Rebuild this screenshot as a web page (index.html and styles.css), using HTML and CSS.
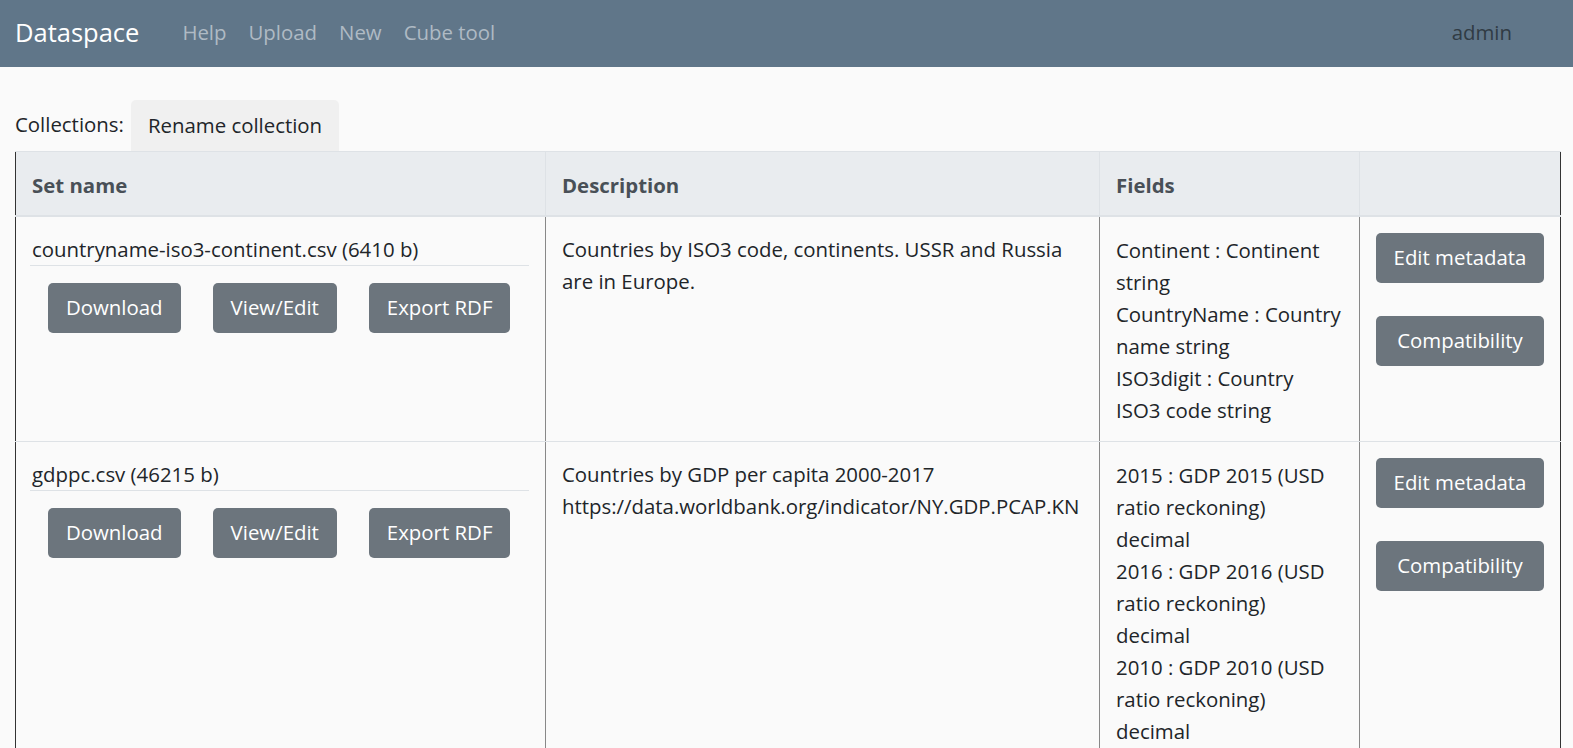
FILE: index.html
```html
<!DOCTYPE html>
<html>
<head>
<meta charset="utf-8">
<title>Dataspace</title>
<link rel="stylesheet" href="styles.css">
</head>
<body>
<nav class="navbar">
  <a class="brand" href="#">Dataspace</a>
  <ul class="nav-links">
    <li><a href="#">Help</a></li>
    <li><a href="#">Upload</a></li>
    <li><a href="#">New</a></li>
    <li><a href="#">Cube tool</a></li>
  </ul>
  <span class="user">admin</span>
</nav>
<main class="content">
  <div class="collections">
    <span class="collections-label">Collections:</span>
    <button class="btn-light">Rename collection</button>
  </div>
  <table class="sets">
    <colgroup>
      <col class="c1"><col class="c2"><col class="c3"><col class="c4">
    </colgroup>
    <thead>
      <tr><th>Set name</th><th>Description</th><th>Fields</th><th></th></tr>
    </thead>
    <tbody>
      <tr>
        <td>
          <div class="filename">countryname-iso3-continent.csv (6410 b)</div>
          <div class="file-actions">
            <button class="btn">Download</button><button class="btn">View/Edit</button><button class="btn">Export RDF</button>
          </div>
        </td>
        <td>Countries by ISO3 code, continents. USSR and Russia are in Europe.</td>
        <td>
          <div>Continent : Continent string</div>
          <div>CountryName : Country name string</div>
          <div>ISO3digit : Country ISO3 code string</div>
        </td>
        <td>
          <button class="btn btn-block">Edit metadata</button>
          <button class="btn btn-block">Compatibility</button>
        </td>
      </tr>
      <tr>
        <td>
          <div class="filename">gdppc.csv (46215 b)</div>
          <div class="file-actions">
            <button class="btn">Download</button><button class="btn">View/Edit</button><button class="btn">Export RDF</button>
          </div>
        </td>
        <td>Countries by GDP per capita 2000-2017<br>https://data.worldbank.org/indicator/NY.GDP.PCAP.KN</td>
        <td>
          <div>2015 : GDP 2015 (USD ratio reckoning) decimal</div>
          <div>2016 : GDP 2016 (USD ratio reckoning) decimal</div>
          <div>2010 : GDP 2010 (USD ratio reckoning) decimal</div>
          <div>2011 : GDP 2011 (USD ratio reckoning) decimal</div>
          <div>2012 : GDP 2012 (USD ratio reckoning) decimal</div>
        </td>
        <td>
          <button class="btn btn-block">Edit metadata</button>
          <button class="btn btn-block">Compatibility</button>
        </td>
      </tr>
    </tbody>
  </table>
</main>
</body>
</html>
```

FILE: styles.css
```css
* { box-sizing: border-box; }
html, body { margin: 0; padding: 0; }
body {
  background: #fafafa;
  color: #212529;
  font-family: "Open Sans", "Noto Sans", sans-serif;
  font-size: 20.4px;
  line-height: 32px;
}
a { text-decoration: none; }

.navbar {
  height: 67px;
  background: #607689;
  display: flex;
  align-items: center;
  padding: 0 15px 4px;
}
.brand {
  color: #fff;
  font-size: 25.5px;
  margin-right: 32px;
}
.nav-links {
  display: flex;
  list-style: none;
  margin: 0;
  padding: 0;
  flex: 1;
}
.nav-links a {
  display: block;
  color: #afbac4;
  padding: 0 11px;
}
.user {
  color: #303b44;
  margin-right: 46px;
}

.content { padding: 33px 13px 0 15px; }
.collections {
  display: flex;
  align-items: flex-end;
  gap: 7px;
}
.collections-label { padding-bottom: 11px; }
.btn-light {
  font: inherit;
  color: #212529;
  background: #f0f0f0;
  border: 0;
  border-radius: 5px 5px 0 0;
  height: 51px;
  padding: 0 17px 2px;
}

.sets {
  width: 1545px;
  border-collapse: collapse;
  table-layout: fixed;
  border-left: 1px solid #333;
  border-right: 1px solid #333;
}
.c1 { width: 530px; }
.c2 { width: 554px; }
.c3 { width: 260px; }
.c4 { width: 201px; }
.sets th {
  background: #e9ecef;
  color: #495057;
  font-weight: 700;
  text-align: left;
  padding: 17px 16px 14px;
  border-top: 1px solid #dee2e6;
  border-bottom: 2px solid #dee2e6;
  border-left: 1px solid #dee2e6;
}
.sets th:first-child { border-left: 1px solid #333; }
.sets td {
  vertical-align: top;
  padding: 16px;
  border-bottom: 1px solid #dee2e6;
  border-left: 1px solid #888;
}
.sets td:first-child { border-left: 1px solid #333; }
.sets td > div:not(.filename):not(.file-actions) { padding-top: 1px; margin-bottom: -1px; }

.filename {
  border-bottom: 1px solid #dee2e6;
  margin-left: -2px;
  padding-left: 2px;
}
.file-actions { padding-top: 17px; }

.btn {
  font: inherit;
  color: #fff;
  background: #6c757d;
  border: 0;
  border-radius: 5px;
  height: 50px;
  padding: 0 18px 2px;
  margin: 0 16px;
  white-space: nowrap;
}
.btn-block {
  display: block;
  width: 100%;
  padding: 0 0 2px;
  margin: 0 0 33px;
}
```
